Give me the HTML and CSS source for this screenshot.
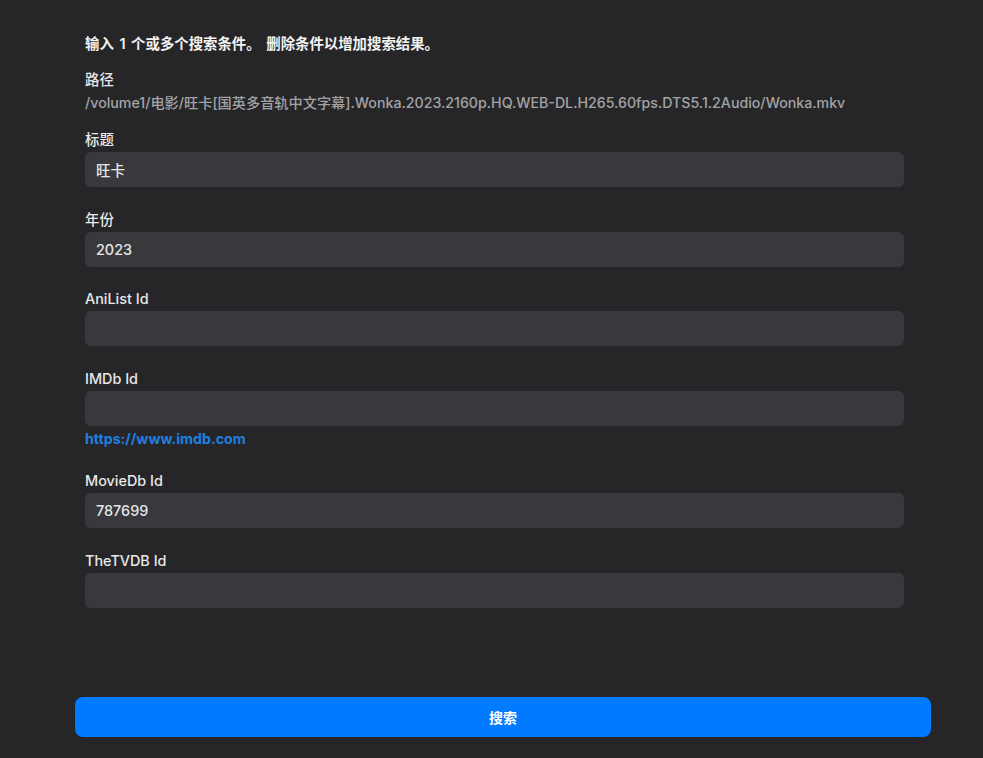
FILE: index.html
```html
<!DOCTYPE html>
<html lang="zh-CN">

<head>
    <meta charset="UTF-8">
    <meta name="viewport" content="width=device-width, initial-scale=1.0">
    <title>搜索</title>
    <link rel="stylesheet" href="styles.css">
</head>

<body>
    <div class="page">
        <form class="search-form">
            <p class="hint">输入 1 个或多个搜索条件。 删除条件以增加搜索结果。</p>

            <div class="path-block">
                <div class="label">路径</div>
                <div class="path">/volume1/电影/旺卡[国英多音轨中文字幕].Wonka.2023.2160p.HQ.WEB-DL.H265.60fps.DTS5.1.2Audio/Wonka.mkv</div>
            </div>

            <div class="field">
                <label class="label" for="title">标题</label>
                <input class="input" id="title" type="text" value="旺卡">
            </div>

            <div class="field">
                <label class="label" for="year">年份</label>
                <input class="input" id="year" type="text" value="2023">
            </div>

            <div class="field">
                <label class="label" for="anilist">AniList Id</label>
                <input class="input" id="anilist" type="text">
            </div>

            <div class="field">
                <label class="label" for="imdb">IMDb Id</label>
                <input class="input" id="imdb" type="text">
                <a class="link" href="#">https://www.imdb.com</a>
            </div>

            <div class="field">
                <label class="label" for="moviedb">MovieDb Id</label>
                <input class="input" id="moviedb" type="text" value="787699">
            </div>

            <div class="field">
                <label class="label" for="tvdb">TheTVDB Id</label>
                <input class="input" id="tvdb" type="text">
            </div>
        </form>

        <div class="footer">
            <button class="btn-search" type="button">搜索</button>
        </div>
    </div>
</body>

</html>
```

FILE: styles.css
```css
* {
    margin: 0;
    padding: 0;
    box-sizing: border-box;
}

body {
    font-family: 'Inter', 'Noto Sans CJK SC', sans-serif;
    background: #262628;
    color: #e8e8e8;
    font-size: 14.4px;
}

.page {
    min-height: 100vh;
    display: flex;
    flex-direction: column;
}

.search-form {
    flex: 1;
    padding: 34px 0 0 85px;
    width: 904px;
}

.hint {
    font-weight: 600;
    line-height: 20px;
    color: #f2f2f2;
    margin-bottom: 16px;
    word-spacing: 2px;
}

.label {
    display: block;
    line-height: 20px;
    margin-bottom: 2px;
    color: #e8e8e8;
    font-weight: 500;
}

.path-block {
    margin-bottom: 17px;
}

.path-block .label {
    margin-bottom: 3px;
}

.path {
    line-height: 20px;
    color: #a3a3a6;
    white-space: nowrap;
    font-size: 14.2px;
    font-weight: 500;
}

.field {
    margin-bottom: 22.5px;
}

.input {
    display: block;
    width: 100%;
    height: 35px;
    border: none;
    border-radius: 6px;
    background: #39393d;
    color: #e6e6e6;
    font-family: inherit;
    font-size: 14.4px;
    font-weight: 500;
    padding: 0 11px;
    outline: none;
}

.link {
    display: block;
    margin-top: 3px;
    line-height: 20px;
    color: #1f7fe0;
    font-size: 14.2px;
    font-weight: bold;
    text-decoration: none;
}

.footer {
    padding: 0 52px 21px 75px;
}

.btn-search {
    display: block;
    width: 100%;
    height: 40px;
    border: none;
    border-radius: 8px;
    background: #007aff;
    color: white;
    font-family: inherit;
    font-size: 14px;
    font-weight: bold;
    cursor: pointer;
}
```
